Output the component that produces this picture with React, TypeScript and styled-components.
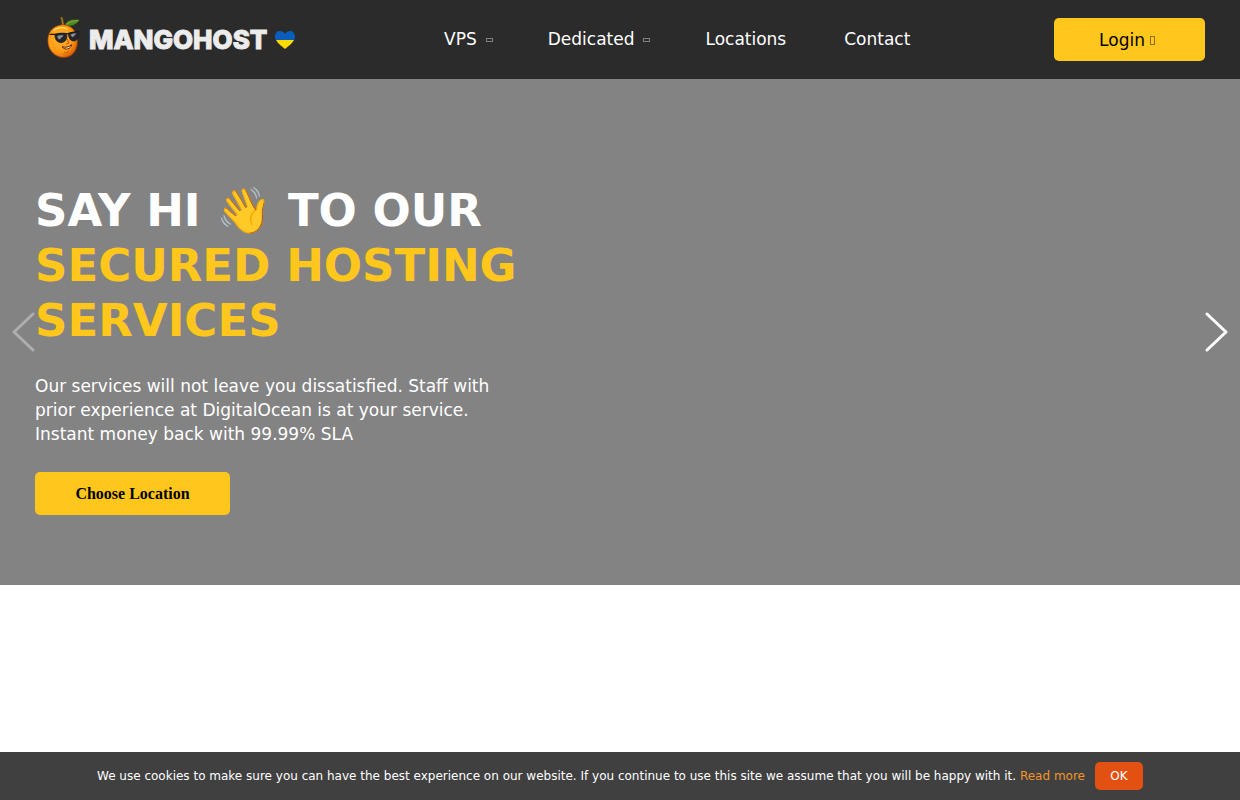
import React from "react";
import styled, { createGlobalStyle } from "styled-components";

const sans = `"DejaVu Sans", Verdana, sans-serif`;
const yellow = "#ffc71c";

const GlobalStyle = createGlobalStyle`
  *, *::before, *::after { box-sizing: border-box; }
  body { margin: 0; background: #fff; font-family: ${sans}; }
  h1, p { margin: 0; }
`;

const Header = styled.header`
  display: flex;
  align-items: center;
  justify-content: space-between;
  height: 79px;
  padding: 0 35px;
  background: #2b2b2b;
`;

const Logo = styled.a`
  display: flex;
  align-items: center;
  gap: 8px;
  padding: 0 8px 0 12px;
  text-decoration: none;
`;

const LogoName = styled.span`
  font: 800 26px/32px Inter, "Liberation Sans", sans-serif;
  color: #ececec;
  -webkit-text-stroke: 1px #ececec;
`;

const Nav = styled.nav`
  display: flex;
  gap: 55px;
  padding-bottom: 2px;
`;

const NavLink = styled.a<{ $menu: boolean }>`
  display: flex;
  align-items: center;
  gap: 9px;
  padding-right: ${(p) => (p.$menu ? 0 : 3)}px;
  font-size: 17px;
  line-height: 24px;
  color: #fff;
  text-decoration: none;
`;

const GlyphBox = styled.span<{ $upright?: boolean }>`
  width: ${(p) => (p.$upright ? 5 : 7)}px;
  height: ${(p) => (p.$upright ? 9 : 4)}px;
  margin-top: 2px;
  border: 1px solid ${(p) => (p.$upright ? "#8f6d0c" : "#808080")};
`;

const Button = styled.button<{ $wide?: boolean }>`
  display: flex;
  align-items: center;
  justify-content: center;
  gap: 5px;
  width: ${(p) => (p.$wide ? 195 : 151)}px;
  height: 43px;
  padding: 0 ${(p) => (p.$wide ? 0 : 5)}px 0 0;
  border: 0;
  border-radius: 5px;
  background: ${yellow};
  color: #000;
  font: ${(p) => (p.$wide ? `bold 16px/24px "Liberation Serif", serif` : `17px/24px ${sans}`)};
  cursor: pointer;
`;

const Hero = styled.section`
  position: relative;
  padding: 104px 35px 70px;
  background: #838383;
  color: #fff;
`;

const Slide = styled.div`
  display: flex;
  flex-direction: column;
  align-items: flex-start;
  gap: 26px;
  max-width: 490px;
`;

const Title = styled.h1`
  font-size: 45px;
  line-height: 55px;
  font-weight: bold;
`;

const Accent = styled.span`
  display: block;
  color: ${yellow};
`;

const Lead = styled.p`
  font-size: 17px;
  line-height: 24px;
`;

const Arrow = styled.button<{ $side: "left" | "right" }>`
  position: absolute;
  top: 50%;
  ${(p) => p.$side}: 10px;
  display: flex;
  width: 27px;
  height: 44px;
  margin-top: -22px;
  padding: 0;
  border: 0;
  background: none;
  color: #fff;
  opacity: ${(p) => (p.$side === "left" ? 0.35 : 1)};
`;

const CookieBar = styled.aside`
  position: fixed;
  left: 0;
  right: 0;
  bottom: 0;
  display: flex;
  align-items: center;
  justify-content: center;
  gap: 10px;
  min-height: 48px;
  background: #404040;
  color: #fff;
  font-size: 12px;
  line-height: 18px;
`;

const ReadMore = styled.a`
  color: #f0952a;
  text-decoration: none;
`;

const OkButton = styled.button`
  width: 48px;
  height: 28px;
  padding: 0;
  border: 0;
  border-radius: 5px;
  background: #e25012;
  color: #fff;
  font: 12px/18px ${sans};
  cursor: pointer;
`;

const Mango = () => (
  <svg width="34" height="48" viewBox="21 23 102 144" aria-hidden="true">
    <defs>
      <radialGradient id="skin" cx="0.42" cy="0.4" r="0.66">
        <stop offset="0" stopColor="#ffb833" />
        <stop offset="0.65" stopColor="#ff9812" />
        <stop offset="1" stopColor="#cf5205" />
      </radialGradient>
    </defs>
    <path d="M66 56C66 43 63 34 61 27L67 25C70 35 72 45 74 57Z" fill="#a08432" stroke="#4d3c12" strokeWidth="2" />
    <path d="M74 51C80 36 96 31 119 35C110 50 91 57 74 51Z" fill="#4f8a20" stroke="#234012" strokeWidth="2" />
    <path d="M78 49C87 41 99 37 115 36" fill="none" stroke="#9cc653" strokeWidth="2" />
    <path d="M58 51C78 46 97 55 105 70C115 88 115 114 104 130C92 149 68 152 49 142C30 132 21 111 24 88C27 68 40 55 58 51Z" fill="url(#skin)" stroke="#8f3a04" strokeWidth="2" />
    <path d="M31 106C36 127 49 138 70 143" fill="none" stroke="#ffd069" strokeWidth="2" strokeDasharray="3 4" />
    <path d="M42 66C54 56 72 55 82 63" fill="none" stroke="#ffd76e" strokeWidth="4" strokeLinecap="round" />
    <path d="M29 78L46 78L82 76L118 70" fill="none" stroke="#1b1c20" strokeWidth="4" />
    <path d="M45 78C55 74 72 73 80 76C83 92 75 103 62 103C50 102 44 91 45 78Z" fill="#24262c" stroke="#15161a" strokeWidth="2" />
    <path d="M85 76C94 71 107 69 116 71C118 86 112 97 101 98C91 98 86 89 85 76Z" fill="#24262c" stroke="#15161a" strokeWidth="2" />
    <path d="M51 84C57 80 65 80 71 82L57 94Z" fill="#8e9398" />
    <path d="M91 80C97 76 103 75 109 76L98 87Z" fill="#8e9398" />
    <path d="M82 92L86 104L78 107" fill="none" stroke="#b75404" strokeWidth="3" />
    <path d="M66 115C77 119 87 116 95 109C92 123 76 127 66 115Z" fill="#fff6dc" stroke="#632104" strokeWidth="3" />
    <path d="M72 131C78 134 83 132 87 129" fill="none" stroke="#b75404" strokeWidth="2" />
  </svg>
);

const Heart = () => (
  <svg width="20" height="18" viewBox="0 0 20 18" aria-hidden="true">
    <path d="M0 6C0 2 2 0 5 0C7 0 9 1 10 3C11 1 13 0 15 0C18 0 20 2 20 6C20 7 20 8 19 9H1C0 8 0 7 0 6Z" fill="#0b5dbb" />
    <path d="M1 9H19C17 13 13 15 10 18C7 15 3 13 1 9Z" fill="#ffd900" />
  </svg>
);

const Chevron = ({ flip }: { flip?: boolean }) => (
  <svg width="27" height="44" viewBox="0 0 27 44" aria-hidden="true">
    <path
      d={flip ? "M23 4L4 22L23 40" : "M4 4L23 22L4 40"}
      fill="none"
      stroke="currentColor"
      strokeWidth="3"
      strokeLinecap="round"
      strokeLinejoin="round"
    />
  </svg>
);

const links = [
  { label: "VPS", menu: true },
  { label: "Dedicated", menu: true },
  { label: "Locations", menu: false },
  { label: "Contact", menu: false },
];

export default function App() {
  return (
    <>
      <GlobalStyle />
      <Header>
        <Logo href="#">
          <Mango />
          <LogoName>MANGOHOST</LogoName>
          <Heart />
        </Logo>
        <Nav>
          {links.map((l) => (
            <NavLink href="#" key={l.label} $menu={l.menu}>
              {l.label}
              {l.menu && <GlyphBox />}
            </NavLink>
          ))}
        </Nav>
        <Button type="button">
          Login
          <GlyphBox $upright />
        </Button>
      </Header>
      <main>
        <Hero>
          <Slide>
            <Title>
              SAY HI 👋 TO OUR <Accent>SECURED HOSTING SERVICES</Accent>
            </Title>
            <Lead>
              Our services will not leave you dissatisfied. Staff with prior experience at
              DigitalOcean is at your service. Instant money back with 99.99% SLA
            </Lead>
            <Button type="button" $wide>
              Choose Location
            </Button>
          </Slide>
          <Arrow type="button" $side="left" aria-label="Previous slide" disabled>
            <Chevron flip />
          </Arrow>
          <Arrow type="button" $side="right" aria-label="Next slide">
            <Chevron />
          </Arrow>
        </Hero>
      </main>
      <CookieBar>
        <span>
          We use cookies to make sure you can have the best experience on our website. If you
          continue to use this site we assume that you will be happy with it.{" "}
          <ReadMore href="#">Read more</ReadMore>
        </span>
        <OkButton type="button">OK</OkButton>
      </CookieBar>
    </>
  );
}
